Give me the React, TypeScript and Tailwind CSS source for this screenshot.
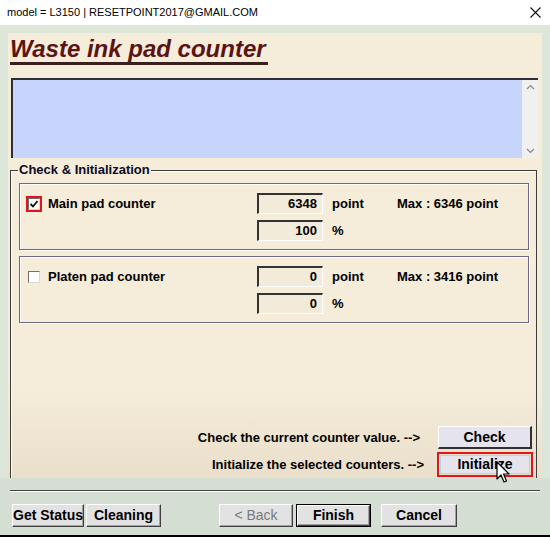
import React from "react";

const font = { fontFamily: '"Liberation Sans", Arial, sans-serif' };

const ValueBox = ({ value }: { value: string }) => (
  <div className="w-[66px] h-[21px] bg-[#f3ebd9] border-t-[2px] border-l-[2px] border-t-[#333333] border-l-[#333333] border-b border-r border-b-white border-r-white flex items-center justify-end pr-[5px] text-[13px] font-bold text-black">
    {value}
  </div>
);

const CheckBox = ({ checked, marked }: { checked?: boolean; marked?: boolean }) => (
  <div
    className={
      "w-[16px] h-[16px] flex items-center justify-center " +
      (marked ? "border-2 border-[#e0141b]" : "")
    }
  >
    <div className="w-[12px] h-[12px] bg-white border border-t-[#707070] border-l-[#707070] border-b-[#d8d8d8] border-r-[#d8d8d8] flex items-center justify-center">
      {checked && (
        <svg width="10" height="10" viewBox="0 0 10 10">
          <path d="M1.5 5 L4 7.5 L8.5 2" fill="none" stroke="#111" strokeWidth="1.8" />
        </svg>
      )}
    </div>
  </div>
);

const CounterPanel = ({
  label,
  checked,
  marked,
  points,
  percent,
  max,
}: {
  label: string;
  checked?: boolean;
  marked?: boolean;
  points: string;
  percent: string;
  max: string;
}) => (
  <div className="h-[67px] border border-[#6d6982] shadow-[inset_1px_1px_0_#ffffff,1px_1px_0_#ffffff] pl-[6px] pt-[9px]">
    <div className="flex items-center h-[21px]">
      <div className="w-[231px] flex items-center gap-[6px]">
        <CheckBox checked={checked} marked={marked} />
        <span className="text-[13px] font-bold text-black">{label}</span>
      </div>
      <ValueBox value={points} />
      <span className="ml-[9px] w-[65px] text-[13px] font-bold text-black">point</span>
      <span className="text-[13px] font-bold text-black">{max}</span>
    </div>
    <div className="flex items-center h-[21px] mt-[6px]">
      <div className="w-[231px]" />
      <ValueBox value={percent} />
      <span className="ml-[9px] text-[13px] font-bold text-black">%</span>
    </div>
  </div>
);

const WinButton = ({
  children,
  width,
  disabled,
  isDefault,
}: {
  children: React.ReactNode;
  width: string;
  disabled?: boolean;
  isDefault?: boolean;
}) => (
  <div className={width + " h-[23px] " + (isDefault ? "border border-black" : "")}>
    <div
      className={
        "w-full h-full bg-[#e2e2e2] border-t border-l border-t-white border-l-white border-b border-r border-b-[#404040] border-r-[#404040] shadow-[inset_-1px_-1px_0_#a0a0a0] flex items-center justify-center text-[14px] " +
        (disabled ? "text-[#7a7a7a]" : "font-bold text-black")
      }
    >
      {children}
    </div>
  </div>
);

export default function App() {
  return (
    <div className="w-[550px] h-[537px] bg-[#dce7da] flex flex-col overflow-hidden relative" style={font}>
      {/* title bar */}
      <div className="h-[25px] bg-white flex items-center justify-between pl-[7px] pr-[9px] shrink-0">
        <span className="text-[11px] text-black">model = L3150 | RESETPOINT2017@GMAIL.COM</span>
        <svg width="11" height="11" viewBox="0 0 11 11">
          <path d="M0.5 0.5 L10.5 10.5 M10.5 0.5 L0.5 10.5" stroke="#111" strokeWidth="1.1" />
        </svg>
      </div>

      {/* main cream panel */}
      <div className="mx-[8px] mt-[8px] h-[445px] bg-gradient-to-b from-[#f5ecd9] via-[#f5ecd9] via-80% to-[#e9dfcb] flex flex-col pl-[2px] pr-[4px] shrink-0">
        <div className="mt-[3px]">
          <h1 className="inline-block text-[24px] leading-[26px] font-bold italic text-[#5b1414] border-b-[3px] border-[#3b1f1f] pr-[2px]">
            Waste ink pad counter
          </h1>
        </div>

        {/* message box */}
        <div className="mt-[13px] ml-[1px] h-[80px] flex border-t-[2px] border-l-[2px] border-[#2e2e38] shrink-0">
          <div className="flex-1 bg-[#c7d5fd]" />
          <div className="w-[16px] bg-[#f0f0f0] flex flex-col justify-between items-center py-[4px]">
            <svg width="9" height="6" viewBox="0 0 9 6">
              <path d="M1 5 L4.5 1.5 L8 5" fill="none" stroke="#8a8a8a" strokeWidth="1.2" />
            </svg>
            <svg width="9" height="6" viewBox="0 0 9 6">
              <path d="M1 1 L4.5 4.5 L8 1" fill="none" stroke="#8a8a8a" strokeWidth="1.2" />
            </svg>
          </div>
        </div>

        {/* group: Check & Initialization */}
        <div className="mt-[12px] mr-[1px] flex-1 border border-b-0 border-[#3c3c3c] shadow-[inset_1px_1px_0_#ffffff] pl-[8px] pr-[7px] pb-[1px] flex flex-col">
          <span className="self-start -mt-[9px] -ml-[1px] px-[1px] text-[13px] leading-[16px] font-bold text-[#0a0a28] bg-[#f5ecd9]">
            Check &amp; Initialization
          </span>
          <div className="mt-[5px]">
            <CounterPanel label="Main pad counter" checked marked points="6348" percent="100" max="Max : 6346 point" />
          </div>
          <div className="mt-[6px]">
            <CounterPanel label="Platen pad counter" points="0" percent="0" max="Max : 3416 point" />
          </div>
          <div className="flex-1" />
          <div className="flex items-center justify-end h-[23px] -mr-[3px]">
            <span className="text-[13px] font-bold text-black">Check the current counter value. --&gt;</span>
            <div className="ml-[18px] w-[94px] h-[23px] bg-[#e5e3ec] border-t border-l border-t-white border-l-white border-b-2 border-r-2 border-b-[#303030] border-r-[#303030] flex items-center justify-center text-[14px] font-bold text-black">
              Check
            </div>
          </div>
          <div className="flex items-center justify-end h-[25px] mt-[3px] -mr-[4px]">
            <span className="text-[13px] font-bold text-black">Initialize the selected counters. --&gt;</span>
            <div className="ml-[13px] w-[96px] h-[25px] border-2 border-[#e3141c] p-[1px]">
              <div className="w-full h-full bg-[#e5e3ec] shadow-[inset_0_0_0_1px_#9fe0e0] flex items-center justify-center text-[14px] font-bold text-black">
                Initialize
              </div>
            </div>
          </div>
        </div>
      </div>

      {/* bottom area */}
      <div className="flex-1 bg-[#d4ded2] flex flex-col border-b-2 border-black">
        <div className="mt-[12px] mx-[10px] border-t border-t-[#404040] border-b border-b-white" />
        <div className="mt-[12px] pl-[12px] flex">
          <WinButton width="w-[72px]">Get Status</WinButton>
          <div className="ml-[2px]">
            <WinButton width="w-[75px]">Cleaning</WinButton>
          </div>
          <div className="ml-[58px]">
            <WinButton width="w-[74px]" disabled>
              &lt; Back
            </WinButton>
          </div>
          <div className="ml-[3px]">
            <WinButton width="w-[75px]" isDefault>
              Finish
            </WinButton>
          </div>
          <div className="ml-[10px]">
            <WinButton width="w-[76px]">Cancel</WinButton>
          </div>
        </div>
      </div>

      {/* mouse cursor over Initialize */}
      <svg className="absolute left-[496px] top-[461px]" width="14" height="24" viewBox="0 0 14 24">
        <path
          d="M1 1 L1 18 L5 14 L8 21 L10.5 20 L7.5 13 L13 13 Z"
          fill="#ffffff"
          stroke="#000000"
          strokeWidth="1.2"
          strokeLinejoin="round"
        />
      </svg>
    </div>
  );
}
